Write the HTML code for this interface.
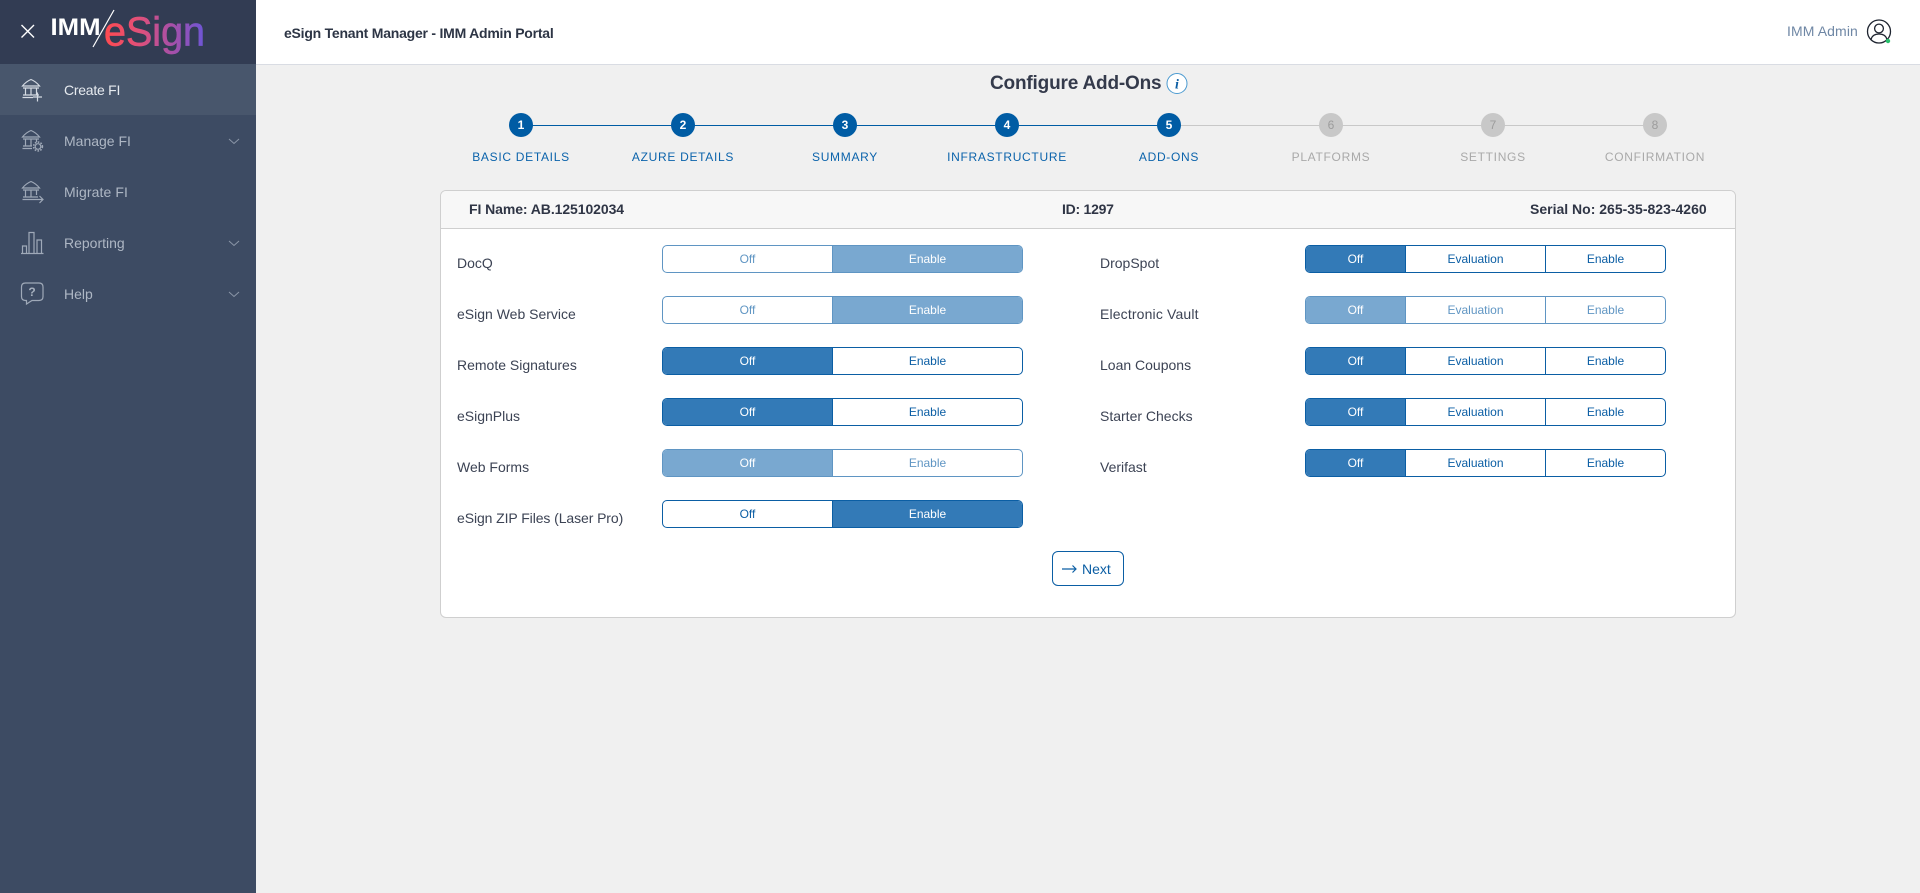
<!DOCTYPE html>
<html lang="en"><head><meta charset="utf-8"><title>Configure Add-Ons</title>
<style>
*{box-sizing:border-box}
html,body{margin:0;padding:0;width:1920px;height:893px;overflow:hidden;background:#f0f0f0;font-family:"Liberation Sans",sans-serif;color:#343a4b}
.a{position:absolute;white-space:nowrap}
#side{position:absolute;left:0;top:0;width:256px;height:893px;background:#3d4b63}
#brand{position:absolute;left:0;top:0;width:256px;height:64px;background:#323c53}
#active{position:absolute;left:0;top:64px;width:256px;height:51px;background:#48566c}
.nav{position:absolute;left:64px;font-size:14px;line-height:16px;color:#aeb7c4}
#top{position:absolute;left:256px;top:0;width:1664px;height:65px;background:#fff;border-bottom:1px solid #d9dce3}
.c{position:absolute;top:113px;width:24px;height:24px;border-radius:50%;background:#005ca4;color:#fff;font-size:12px;font-weight:bold;line-height:24px;text-align:center}
.c.o{background:#c8c8c8;color:#9c9c9c;font-weight:normal}
.s{position:absolute;top:150px;width:162px;text-align:center;font-size:12px;line-height:14px;letter-spacing:.7px;color:#0b63ab}
.s.o{color:#a9a9a9}
#card{position:absolute;left:440px;top:190px;width:1296px;height:428px;background:#fff;border:1px solid #cfcfcf;border-radius:6px;overflow:hidden}
#ch{position:absolute;left:0;top:0;width:100%;height:38px;background:#f7f7f7;border-bottom:1px solid #cfcfcf}
.h{position:absolute;top:201px;font-size:14px;line-height:16px;font-weight:bold;color:#2f3545}
.l{position:absolute;font-size:14px;line-height:16px;color:#3c4354}
.t{position:absolute;height:28px;width:361px;display:flex;background:#fff;border:1px solid #0b5ea4;border-radius:5px;overflow:hidden;font-size:12px;line-height:26px;text-align:center;color:#0b5ea4}
.t.x{left:662px}.t.y{left:1305px}
.t.d{opacity:.65}
.t div{height:100%}
.t .on{background:#337ab7;color:#fff}
.x div:first-child{width:170px;border-right:1px solid #0b5ea4}
.x div:last-child{flex:1}
.y div:nth-child(1){width:100px;border-right:1px solid #0b5ea4}
.y div:nth-child(2){width:140px;border-right:1px solid #0b5ea4}
.y div:nth-child(3){flex:1}
#next{position:absolute;left:1052px;top:551px;width:72px;height:35px;background:#fff;border:1px solid #0b5ea4;border-radius:6px}
</style></head><body>

<div id="side"></div><div id="brand"></div><div id="active"></div>

<svg class="a" style="left:0;top:0" width="256" height="320" viewBox="0 0 256 320">
<defs><linearGradient id="g" gradientUnits="userSpaceOnUse" x1="104" y1="0" x2="205" y2="0">
<stop offset="0" stop-color="#ff4a4f"/><stop offset=".35" stop-color="#e0507a"/><stop offset=".7" stop-color="#a250ac"/><stop offset="1" stop-color="#6c56d6"/></linearGradient></defs>
<path d="M21.5 25 34 37.5M34 25 21.5 37.5" stroke="#fff" stroke-width="1.4" fill="none"/>
<text x="50.5" y="35" font-family="Liberation Sans" font-weight="bold" font-size="24.5" fill="#fff" textLength="50" lengthAdjust="spacingAndGlyphs">IMM</text>
<path d="M93 47 114 10" stroke="#fff" stroke-width="1.2"/>
<text x="104" y="45.5" font-family="Liberation Sans" font-size="41" fill="url(#g)" stroke="url(#g)" stroke-width=".7" textLength="101" lengthAdjust="spacingAndGlyphs">eSign</text>

<g fill="none" stroke="#d5dbe3" stroke-width="1.2">
<path d="M22.5 86Q26 81.5 31 79.5 36 81.5 39.5 86ZM23 88H39M25.5 88V95M31 88V95M36.5 88V95M23 95H39M22.5 97.5H33M37.5 92.5V101.5M33 97H42"/>
</g>
<g fill="none" stroke="#9fa9b8" stroke-width="1.2">
<path d="M22.5 137Q26 132.5 31 130.5 36 132.5 39.5 137ZM23 139H39M25.5 139V146M31 139V146M36.5 139V142M23 146H32M22.5 148.5H32"/>
<circle cx="38" cy="146.5" r="2.8"/><circle cx="38" cy="146.5" r="4.4" stroke-dasharray="1.6 1.3" stroke-width="1.6"/>
<path d="M22.5 188Q26 183.5 31 181.5 36 183.5 39.5 188ZM23 190H39M25.5 190V197M31 190V197M36.5 190V195M23 197H38M22.5 199.5H43M39.5 196 43 199.5 39.5 203"/>
<path d="M21 253.5H43.5M22.5 253V246H26.5V253M29 253V232.5H34V253M37 253V240H41.5V253"/>
<path d="M25.5 283H39Q43 283 43 287V296.5Q43 300.5 39 300.5H32L26.5 304V300.5H25.5Q21.5 300.5 21.5 296.5V287Q21.5 283 25.5 283Z"/>
<path d="M229 139 234 143.5 239 139M229 241 234 245.5 239 241M229 292 234 296.5 239 292" stroke="#8b96a8" stroke-width="1"/>
</g>
<text x="32" y="296" text-anchor="middle" font-family="Liberation Sans" font-weight="bold" font-size="12" fill="#a6b0be">?</text>
</svg>

<div class="nav" style="top:82px;color:#e6eaef;letter-spacing:-.25px">Create FI</div>
<div class="nav" style="top:133px">Manage FI</div>
<div class="nav" style="top:184px;letter-spacing:.1px">Migrate FI</div>
<div class="nav" style="top:235px">Reporting</div>
<div class="nav" style="top:286px">Help</div>

<div id="top"></div>
<div class="a" style="left:284px;top:25px;font-size:14px;line-height:16px;font-weight:bold;color:#2d3545;letter-spacing:-.23px">eSign Tenant Manager - IMM Admin Portal</div>
<div class="a" style="left:1787px;top:23px;font-size:14px;line-height:16px;color:#6f87a5;letter-spacing:.1px">IMM Admin</div>
<svg class="a" style="left:1865px;top:18px" width="30" height="30" viewBox="0 0 30 30">
<circle cx="14" cy="13.5" r="11.5" fill="none" stroke="#1e2430" stroke-width="1.3"/>
<circle cx="14" cy="10.5" r="4.4" fill="none" stroke="#1e2430" stroke-width="1.3"/>
<path d="M6 21.5C7 17.5 10 16 14 16S21 17.5 22 21.5" fill="none" stroke="#1e2430" stroke-width="1.3"/>
<circle cx="23" cy="23" r="2.2" fill="#27c26c"/>
</svg>

<div class="a" style="left:990px;top:73px;font-size:19px;line-height:22px;font-weight:bold;color:#343a4b;letter-spacing:-.18px">Configure Add-Ons</div>
<svg class="a" style="left:1165px;top:72px" width="24" height="24" viewBox="0 0 24 24">
<circle cx="12" cy="11.5" r="10" fill="#fff" stroke="#4b9ad0" stroke-width="1"/>
<text x="12" y="16.5" text-anchor="middle" font-family="Liberation Serif" font-style="italic" font-weight="bold" font-size="14" fill="#0b5ea4">i</text>
</svg>

<div class="a" style="left:521px;top:125px;width:648px;height:1px;background:#005ca4"></div>
<div class="a" style="left:1169px;top:125px;width:486px;height:1px;background:#c8c8c8"></div>
<div class="c" style="left:509px">1</div><div class="c" style="left:671px">2</div><div class="c" style="left:833px">3</div><div class="c" style="left:995px">4</div><div class="c" style="left:1157px">5</div>
<div class="c o" style="left:1319px">6</div><div class="c o" style="left:1481px">7</div><div class="c o" style="left:1643px">8</div>
<div class="s" style="left:440px">BASIC DETAILS</div><div class="s" style="left:602px">AZURE DETAILS</div><div class="s" style="left:764px">SUMMARY</div><div class="s" style="left:926px">INFRASTRUCTURE</div><div class="s" style="left:1088px">ADD-ONS</div>
<div class="s o" style="left:1250px">PLATFORMS</div><div class="s o" style="left:1412px">SETTINGS</div><div class="s o" style="left:1574px">CONFIRMATION</div>

<div id="card"><div id="ch"></div></div>
<div class="h" style="left:469px;letter-spacing:-.08px">FI Name: AB.125102034</div>
<div class="h" style="left:1062px;letter-spacing:-.25px">ID: 1297</div>
<div class="h" style="left:1530px;letter-spacing:0">Serial No: 265-35-823-4260</div>

<div class="l" style="left:457px;top:255px">DocQ</div>
<div class="l" style="left:457px;top:306px">eSign Web Service</div>
<div class="l" style="left:457px;top:357px">Remote Signatures</div>
<div class="l" style="left:457px;top:408px">eSignPlus</div>
<div class="l" style="left:457px;top:459px">Web Forms</div>
<div class="l" style="left:457px;top:510px;letter-spacing:-.09px">eSign ZIP Files (Laser Pro)</div>

<div class="t x d" style="top:245px"><div>Off</div><div class="on">Enable</div></div>
<div class="t x d" style="top:296px"><div>Off</div><div class="on">Enable</div></div>
<div class="t x" style="top:347px"><div class="on">Off</div><div>Enable</div></div>
<div class="t x" style="top:398px"><div class="on">Off</div><div>Enable</div></div>
<div class="t x d" style="top:449px"><div class="on">Off</div><div>Enable</div></div>
<div class="t x" style="top:500px"><div>Off</div><div class="on">Enable</div></div>

<div class="l" style="left:1100px;top:255px">DropSpot</div>
<div class="l" style="left:1100px;top:306px;letter-spacing:.15px">Electronic Vault</div>
<div class="l" style="left:1100px;top:357px">Loan Coupons</div>
<div class="l" style="left:1100px;top:408px">Starter Checks</div>
<div class="l" style="left:1100px;top:459px">Verifast</div>

<div class="t y" style="top:245px"><div class="on">Off</div><div>Evaluation</div><div>Enable</div></div>
<div class="t y d" style="top:296px"><div class="on">Off</div><div>Evaluation</div><div>Enable</div></div>
<div class="t y" style="top:347px"><div class="on">Off</div><div>Evaluation</div><div>Enable</div></div>
<div class="t y" style="top:398px"><div class="on">Off</div><div>Evaluation</div><div>Enable</div></div>
<div class="t y" style="top:449px"><div class="on">Off</div><div>Evaluation</div><div>Enable</div></div>

<div id="next"></div>
<svg class="a" style="left:1060px;top:562px" width="20" height="14" viewBox="0 0 20 14"><path d="M2 7H16M12.5 3.5 16 7 12.5 10.5" fill="none" stroke="#0b5ea4" stroke-width="1.2"/></svg>
<div class="a" style="left:1082px;top:561px;font-size:14px;line-height:16px;color:#0b5ea4">Next</div>
</body></html>
